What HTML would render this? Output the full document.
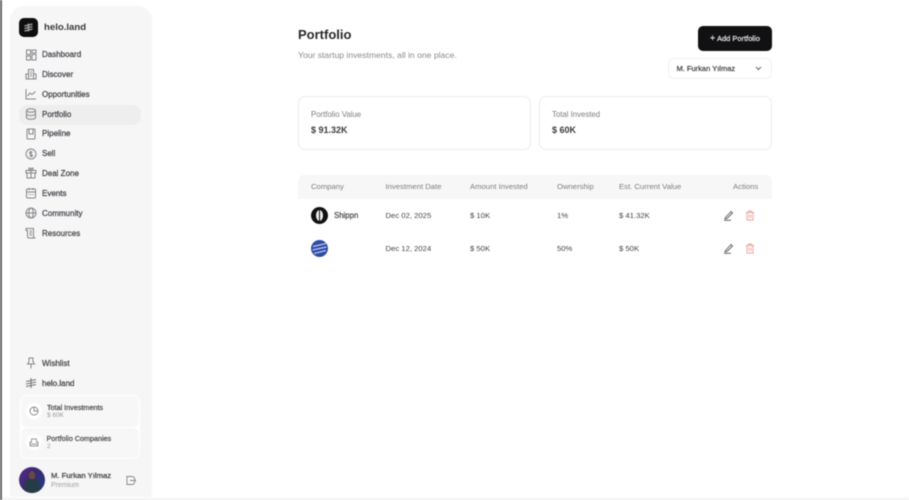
<!DOCTYPE html>
<html><head><meta charset="utf-8">
<style>
*{box-sizing:border-box;margin:0;padding:0}
html,body{width:909px;height:500px;overflow:hidden;background:#fff}
body{font-family:"Liberation Sans",sans-serif;position:relative;color:#222}
#w{position:absolute;left:0;top:0;width:909px;height:500px;filter:blur(.45px)}
.a{position:absolute;white-space:nowrap}
.edge{position:absolute;left:0;top:0;width:1.5px;height:500px;background:#666}
.bot{position:absolute;left:0;top:497px;width:909px;height:3px;background:linear-gradient(#fff,#eee)}
.side{position:absolute;left:10px;top:6px;width:142px;height:500px;background:#f6f6f7;border-radius:14px}
.nav{position:absolute;left:42px;font-size:8px;color:#45454a;-webkit-text-stroke:.25px #45454a;line-height:10px}
.ic{position:absolute;left:25px;width:12px;height:12px;fill:none;stroke:#85858a;stroke-width:1}
.act{position:absolute;left:19px;top:105px;width:122px;height:20px;background:#eeeeef;border-radius:8px}
.card{position:absolute;top:96px;height:54px;background:#fff;border:1px solid #ececee;border-radius:7px}
.lb{font-size:7.800px;color:#7d7d82;line-height:10px}
.val{font-size:9px;font-weight:bold;color:#3a3a3e;line-height:12px}
.th{position:absolute;top:182px;font-size:7.700px;color:#7d7d82;line-height:10px;white-space:nowrap}
.td{position:absolute;font-size:7.700px;color:#444;line-height:10px;white-space:nowrap}
</style></head><body>
<div id="w">
<div class="side"></div>
<div class="a" style="left:19px;top:18px;width:19px;height:19px;background:#0e0e10;border-radius:5px"></div>
<svg class="a" style="left:23px;top:22px" width="11" height="11" viewBox="0 0 11 11" fill="none" stroke="#aaa" stroke-width="1.200"><path d="M1.500 4 L9.500 2M1.500 6.500 L9.500 4.500M1.500 9 L9.500 7M5.500 1.500V9.500"/></svg>
<div class="a" style="left:44px;top:21px;font-size:9.600px;font-weight:bold;color:#38383c;line-height:13px">helo.land</div>
<div class="act"></div>

<svg class="ic" style="top:49px" viewBox="0 0 12 12"><rect x="1.500" y="1" width="4" height="4.500"/><rect x="7" y="1" width="4" height="3"/><rect x="1.500" y="7" width="4" height="4"/><rect x="7" y="5.500" width="4" height="5.500"/></svg>
<div class="nav" style="top:50px">Dashboard</div>
<svg class="ic" style="top:68px" viewBox="0 0 12 12"><path d="M3.500 11V1.500h5V11M1 11V6h2.500M8.500 6H11v5M.5 11h11M5 4h2M5 6h2M5 8h2"/></svg>
<div class="nav" style="top:70px">Discover</div>
<svg class="ic" style="top:88px" viewBox="0 0 12 12"><path d="M1 1v10h10M2.500 8l2.500-3 2 1.500L10.500 3.500"/></svg>
<div class="nav" style="top:90px">Opportunities</div>
<svg class="ic" style="top:108px" viewBox="0 0 12 12"><ellipse cx="6" cy="2.500" rx="4.500" ry="1.800"/><path d="M1.500 2.500v7c0 1 2 1.800 4.500 1.800s4.500-.8 4.500-1.800v-7M1.500 5.800c0 1 2 1.800 4.500 1.800s4.500-.8 4.500-1.800"/></svg>
<div class="nav" style="top:110px">Portfolio</div>
<svg class="ic" style="top:128px" viewBox="0 0 12 12"><rect x="2" y="1" width="8" height="10" rx="1"/><path d="M4 1v5h4V1"/></svg>
<div class="nav" style="top:129px">Pipeline</div>
<svg class="ic" style="top:148px" viewBox="0 0 12 12"><circle cx="6" cy="6" r="5"/><path d="M7.500 4.500C7 3.500 4.500 3.500 4.500 5s3 1 3 2.500S5 8.800 4.500 7.500M6 3v6"/></svg>
<div class="nav" style="top:149px">Sell</div>
<svg class="ic" style="top:167px" viewBox="0 0 12 12"><rect x="1" y="3.500" width="10" height="2.500"/><path d="M2 6v5h8V6M6 3.500V11M6 3.500C4 3.500 3 1 4.500 1S6 3.500 6 3.500s0-2.500 1.500-2.500S8 3.500 6 3.500"/></svg>
<div class="nav" style="top:169px">Deal Zone</div>
<svg class="ic" style="top:187px" viewBox="0 0 12 12"><rect x="1.500" y="2" width="9" height="9" rx="1"/><path d="M1.500 5h9M4 1v2M8 1v2M3.500 7.500h1M5.500 7.500h1M7.500 7.500h1"/></svg>
<div class="nav" style="top:189px">Events</div>
<svg class="ic" style="top:207px" viewBox="0 0 12 12"><circle cx="6" cy="6" r="5"/><ellipse cx="6" cy="6" rx="2.200" ry="5"/><path d="M1 6h10"/></svg>
<div class="nav" style="top:209px">Community</div>
<svg class="ic" style="top:227px" viewBox="0 0 12 12"><path d="M1 1.500h7.500V9.500c0 1 1 1.500 2 1.500H4c-1 0-1.500-.5-1.500-1.500V3.500H1zM4.500 4h2.500M4.500 6h2.500M4.500 8h2.500"/></svg>
<div class="nav" style="top:229px">Resources</div>

<svg class="ic" style="top:357px" viewBox="0 0 12 12"><path d="M3.500 1h5M4 1v4L2.500 7h7L8 5V1M6 7v4.500"/></svg>
<div class="nav" style="top:359px">Wishlist</div>
<svg class="ic" style="top:377px;stroke:#777" viewBox="0 0 12 12"><path d="M1 4.500 L11 2.500M1 7 L11 5M1 9.500 L11 7.500M6 1v10"/></svg>
<div class="nav" style="top:379px">helo.land</div>

<div class="a" style="left:20px;top:395px;width:120px;height:64px;background:#fff;border-radius:7px"></div>
<div class="a" style="left:21px;top:396px;width:118px;height:31px;background:#f7f7f8;border-radius:6px"></div>
<div class="a" style="left:21px;top:428px;width:118px;height:30px;background:#f7f7f8;border-radius:6px"></div>
<div class="a" style="left:26px;top:403px;width:16px;height:16px;background:#fff;border-radius:50%"></div>
<div class="a" style="left:26px;top:434px;width:16px;height:16px;background:#fff;border-radius:50%"></div>
<svg class="a" style="left:29px;top:406px" width="10" height="10" viewBox="0 0 10 10" fill="none" stroke="#85858a" stroke-width=".9"><circle cx="5" cy="5" r="4"/><path d="M5 1v4h4"/></svg>
<svg class="a" style="left:29px;top:437px" width="10" height="10" viewBox="0 0 10 10" fill="none" stroke="#95959a" stroke-width=".9"><path d="M1 9V5h1.500V2h5v3H9v4zM1 7h8"/></svg>
<div class="a" style="left:47px;top:403px;font-size:7.200px;color:#444;-webkit-text-stroke:.2px #444;line-height:9px">Total Investments</div>
<div class="a" style="left:47px;top:412px;font-size:6.500px;color:#999;line-height:8px">$ 60K</div>
<div class="a" style="left:46.500px;top:434px;font-size:7.200px;color:#444;-webkit-text-stroke:.2px #444;line-height:9px">Portfolio Companies</div>
<div class="a" style="left:47px;top:443px;font-size:6.500px;color:#999;line-height:8px">2</div>

<div class="a" style="left:19px;top:467px;width:26px;height:26px;border-radius:50%;background:linear-gradient(120deg,#5a2a8c 0%,#3a2a70 45%,#1e3a7a 100%);overflow:hidden">
<div style="position:absolute;left:10px;top:4px;width:6px;height:9px;border-radius:50%;background:#6b4a3e"></div>
<div style="position:absolute;left:6px;top:12px;width:14px;height:14px;border-radius:5px 5px 0 0;background:#243d45"></div>
</div>
<div class="a" style="left:51px;top:471px;font-size:7.700px;color:#444;-webkit-text-stroke:.25px #444;line-height:10px">M. Furkan Yılmaz</div>
<div class="a" style="left:51px;top:481px;font-size:7px;color:#a0a0a4;line-height:9px">Premium</div>
<svg class="a" style="left:125px;top:475px" width="12" height="11" viewBox="0 0 12 11" fill="none" stroke="#85858a" stroke-width=".9"><path d="M7 1.500H2v8h5M5 5.500h6M7 1.500c2 0 3 2 3 4M7 9.500c2 0 3-2 3-4"/></svg>

<div class="a" style="left:298px;top:27px;font-size:13px;font-weight:bold;color:#28282b;line-height:16px">Portfolio</div>
<div class="a" style="left:298px;top:50px;font-size:8.600px;color:#8a8a8e;line-height:11px">Your startup investments, all in one place.</div>

<div class="a" style="left:698px;top:26px;width:74px;height:25px;background:#111113;border-radius:5px;color:#e8e8e8;font-size:7.500px;-webkit-text-stroke:.2px #e8e8e8;line-height:25px;text-align:center"><span style="font-size:9px">+</span> Add Portfolio</div>
<div class="a" style="left:668px;top:58px;width:104px;height:21px;background:#fff;border:1px solid #f0f0f1;border-radius:5px;font-size:7.500px;color:#444;-webkit-text-stroke:.25px #444;line-height:20px;padding-left:7.500px">M. Furkan Yılmaz</div>
<svg class="a" style="left:755px;top:66px" width="7" height="5" viewBox="0 0 7 5" fill="none" stroke="#666" stroke-width="1"><path d="M1 1l2.500 2.500L6 1"/></svg>

<div class="card" style="left:298px;width:233px"></div>
<div class="card" style="left:539px;width:233px"></div>
<div class="a lb" style="left:311px;top:110px">Portfolio Value</div>
<div class="a val" style="left:311px;top:124px">$ 91.32K</div>
<div class="a lb" style="left:552px;top:110px">Total Invested</div>
<div class="a val" style="left:552px;top:124px">$ 60K</div>

<div class="a" style="left:298px;top:175px;width:474px;height:24px;background:#f7f7f8;border-radius:6px 6px 0 0"></div>
<div class="th" style="left:311px">Company</div>
<div class="th" style="left:385.500px">Investment Date</div>
<div class="th" style="left:470px">Amount Invested</div>
<div class="th" style="left:557px">Ownership</div>
<div class="th" style="left:619px">Est. Current Value</div>
<div class="th" style="left:733px">Actions</div>

<div class="a" style="left:311px;top:207px;width:17px;height:17px;border-radius:50%;background:#111"></div>
<div class="a" style="left:316px;top:210px;width:7px;height:11px;border-radius:50%;background:#eee"></div>
<div class="a" style="left:319px;top:210px;width:1px;height:11px;background:#111"></div>
<div class="td" style="left:334px;top:211px;font-size:7.800px;color:#444;-webkit-text-stroke:.2px #444">Shippn</div>
<div class="td" style="left:385.500px;top:211px">Dec 02, 2025</div>
<div class="td" style="left:470px;top:211px">$ 10K</div>
<div class="td" style="left:557px;top:211px">1%</div>
<div class="td" style="left:619px;top:211px">$ 41.32K</div>

<svg class="a" style="left:311px;top:240px" width="17" height="17" viewBox="0 0 17 17"><circle cx="8.500" cy="8.500" r="8.500" fill="#2f4ba8"/><path d="M2 6.500 L15 3.500M1.500 10 L15.500 7M3 13.500 L15 10.500" stroke="#b9c6ec" stroke-width="1.300" fill="none"/></svg>
<div class="td" style="left:385.500px;top:244px">Dec 12, 2024</div>
<div class="td" style="left:470px;top:244px">$ 50K</div>
<div class="td" style="left:557px;top:244px">50%</div>
<div class="td" style="left:619px;top:244px">$ 50K</div>

<svg class="a" style="left:723px;top:210px" width="11" height="11" viewBox="0 0 11 11" fill="none" stroke="#555" stroke-width=".9"><path d="M2.500 7.500L8 1.500l1.500 1.500L4 8.500l-2 .5zM1 10.300h7"/></svg>
<svg class="a" style="left:723px;top:243px" width="11" height="11" viewBox="0 0 11 11" fill="none" stroke="#555" stroke-width=".9"><path d="M2.500 7.500L8 1.500l1.500 1.500L4 8.500l-2 .5zM1 10.300h7"/></svg>
<svg class="a" style="left:745px;top:210px" width="10" height="11" viewBox="0 0 10 11" fill="none" stroke="#eaa098" stroke-width=".9"><path d="M1 2.500h8M3.500 2.500V1h3v1.500M2 2.500V10h6V2.500M4 4.500v3.500M6 4.500v3.500"/></svg>
<svg class="a" style="left:745px;top:243px" width="10" height="11" viewBox="0 0 10 11" fill="none" stroke="#eaa098" stroke-width=".9"><path d="M1 2.500h8M3.500 2.500V1h3v1.500M2 2.500V10h6V2.500M4 4.500v3.500M6 4.500v3.500"/></svg>

<div class="bot"></div>
<div class="edge"></div>
</div>
</body></html>
